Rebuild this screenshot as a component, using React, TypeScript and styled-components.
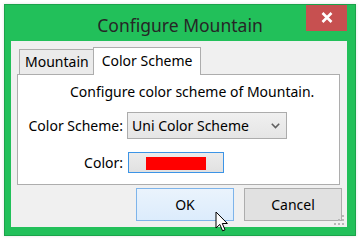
import React from "react";
import styled, { createGlobalStyle } from "styled-components";

const Global = createGlobalStyle`
  html, body { margin: 0; padding: 0; background: #ffffff; }
  body { font-family: "Noto Sans", "Open Sans", sans-serif; color: #000; }
  * { box-sizing: border-box; }
`;

const Stage = styled.div`
  position: relative;
  width: 360px;
  height: 240px;
  padding: 4px 0 0 4px;
`;

const Window = styled.div`
  width: 352px;
  height: 232px;
  background: #22c05a;
  border: 1px solid #1ba34b;
  padding: 0 8px 8px 6px;
  display: flex;
  flex-direction: column;
  box-shadow: 0 0 3px rgba(0, 0, 0, 0.12);
`;

const TitleBar = styled.div`
  position: relative;
  height: 36px;
  display: flex;
  justify-content: center;
  align-items: flex-start;
`;

const Title = styled.div`
  font-size: 17.5px;
  line-height: 24px;
  margin-top: 8px;
  color: #262626;
  margin-left: 2px;
`;

const CloseButton = styled.div`
  position: absolute;
  right: 0;
  top: 0;
  width: 41px;
  height: 26px;
  background: #c75050;
  display: flex;
  align-items: center;
  justify-content: center;
  padding-bottom: 2px;
`;

const Client = styled.div`
  flex: 1;
  background: #f0f0f0;
  padding: 6px 5px 6px 6px;
  display: flex;
  flex-direction: column;
  position: relative;
`;

const TabStrip = styled.div`
  height: 27px;
  display: flex;
  align-items: flex-end;
  padding-left: 2px;
  margin-right: 2px;
`;

const Tab = styled.div<{ $active?: boolean }>`
  position: relative;
  z-index: ${(p) => (p.$active ? 1 : 0)};
  height: ${(p) => (p.$active ? 28 : 25)}px;
  margin-bottom: ${(p) => (p.$active ? -1 : 0)}px;
  margin-left: ${(p) => (p.$active ? -1 : 0)}px;
  padding: ${(p) => (p.$active ? "2px 8px 0 8px" : "1px 4px 0 5px")};
  background: ${(p) => (p.$active ? "#ffffff" : "#ebebeb")};
  border: 1px solid #adadad;
  border-bottom: none;
  font-size: 14px;
  line-height: 21px;
  white-space: nowrap;
`;

const Panel = styled.div`
  height: 111px;
  margin-right: 2px;
  background: #ffffff;
  border: 1px solid #adadad;
  padding: 7px 0 0 8px;
  display: flex;
  flex-direction: column;
`;

const Message = styled.div`
  height: 20px;
  line-height: 20px;
  font-size: 14px;
  padding-left: 44px;
  white-space: nowrap;
`;

const FormGrid = styled.div`
  display: grid;
  grid-template-columns: 97px auto;
  column-gap: 4px;
  row-gap: 13px;
  margin-top: 10px;
  align-items: center;
  justify-items: start;
`;

const Label = styled.div`
  justify-self: end;
  font-size: 14px;
  line-height: 20px;
  white-space: nowrap;
`;

const Combo = styled.div`
  width: 160px;
  height: 27px;
  border: 1px solid #acacac;
  background: linear-gradient(#f0f0f0, #e5e5e5);
  display: flex;
  align-items: center;
  justify-content: space-between;
  padding: 0 6px 0 4px;
  font-size: 14px;
`;

const ColorButton = styled.div`
  width: 96px;
  height: 21px;
  margin-left: 1px;
  border: 1px solid #3c94e6;
  background: linear-gradient(#ececec, #e1e1e1);
  display: flex;
  align-items: center;
  justify-content: center;
  padding-top: 2px;
`;

const Swatch = styled.div<{ $color: string }>`
  width: 60px;
  height: 13px;
  background: ${(p) => p.$color};
`;

const ButtonRow = styled.div`
  margin-top: 3px;
  display: flex;
  justify-content: flex-end;
  gap: 10px;
`;

const Button = styled.div<{ $hover?: boolean }>`
  width: 98px;
  height: 33px;
  border: 1px solid ${(p) => (p.$hover ? "#7eb4ea" : "#adadad")};
  background: ${(p) => (p.$hover ? "linear-gradient(#eaf3fc, #dcecfc)" : "#e1e1e1")};
  display: flex;
  align-items: center;
  justify-content: center;
  font-size: 14px;
  padding-bottom: 1px;
`;

const Grip = styled.svg`
  position: absolute;
  right: 2px;
  bottom: 1px;
`;

const Cursor = styled.svg`
  position: absolute;
  left: 215px;
  top: 211px;
`;

export default function App() {
  return (
    <>
      <Global />
      <Stage>
        <Window>
          <TitleBar>
            <Title>Configure Mountain</Title>
            <CloseButton>
              <svg width="12" height="11" viewBox="0 0 12 11">
                <path d="M1.5 1 L10.5 10 M10.5 1 L1.5 10" stroke="#ffffff" strokeWidth="2.6" />
              </svg>
            </CloseButton>
          </TitleBar>
          <Client>
            <TabStrip>
              <Tab>Mountain</Tab>
              <Tab $active>Color Scheme</Tab>
            </TabStrip>
            <Panel>
              <Message>Configure color scheme of Mountain.</Message>
              <FormGrid>
                <Label>Color Scheme:</Label>
                <Combo>
                  <span>Uni Color Scheme</span>
                  <svg width="9" height="6" viewBox="0 0 9 6">
                    <path d="M0.8 0.8 L4.5 4.5 L8.2 0.8" fill="none" stroke="#606060" strokeWidth="1.6" />
                  </svg>
                </Combo>
                <Label>Color:</Label>
                <ColorButton>
                  <Swatch $color="#ff0000" />
                </ColorButton>
              </FormGrid>
            </Panel>
            <ButtonRow>
              <Button $hover>OK</Button>
              <Button>Cancel</Button>
            </ButtonRow>
            <Grip width="12" height="12" viewBox="0 0 12 12">
              <g fill="#b8b8b8">
                <rect x="9" y="1" width="2" height="2" />
                <rect x="9" y="5" width="2" height="2" />
                <rect x="5" y="5" width="2" height="2" />
                <rect x="9" y="9" width="2" height="2" />
                <rect x="5" y="9" width="2" height="2" />
                <rect x="1" y="9" width="2" height="2" />
              </g>
            </Grip>
          </Client>
        </Window>
        <Cursor width="14" height="22" viewBox="0 0 14 22">
          <path
            d="M1 1 L1 17 L4.8 13.4 L7.6 19.8 L10 18.8 L7.3 12.5 L12.4 12.5 Z"
            fill="#ffffff"
            stroke="#000000"
            strokeWidth="1"
            strokeLinejoin="miter"
          />
        </Cursor>
      </Stage>
    </>
  );
}
